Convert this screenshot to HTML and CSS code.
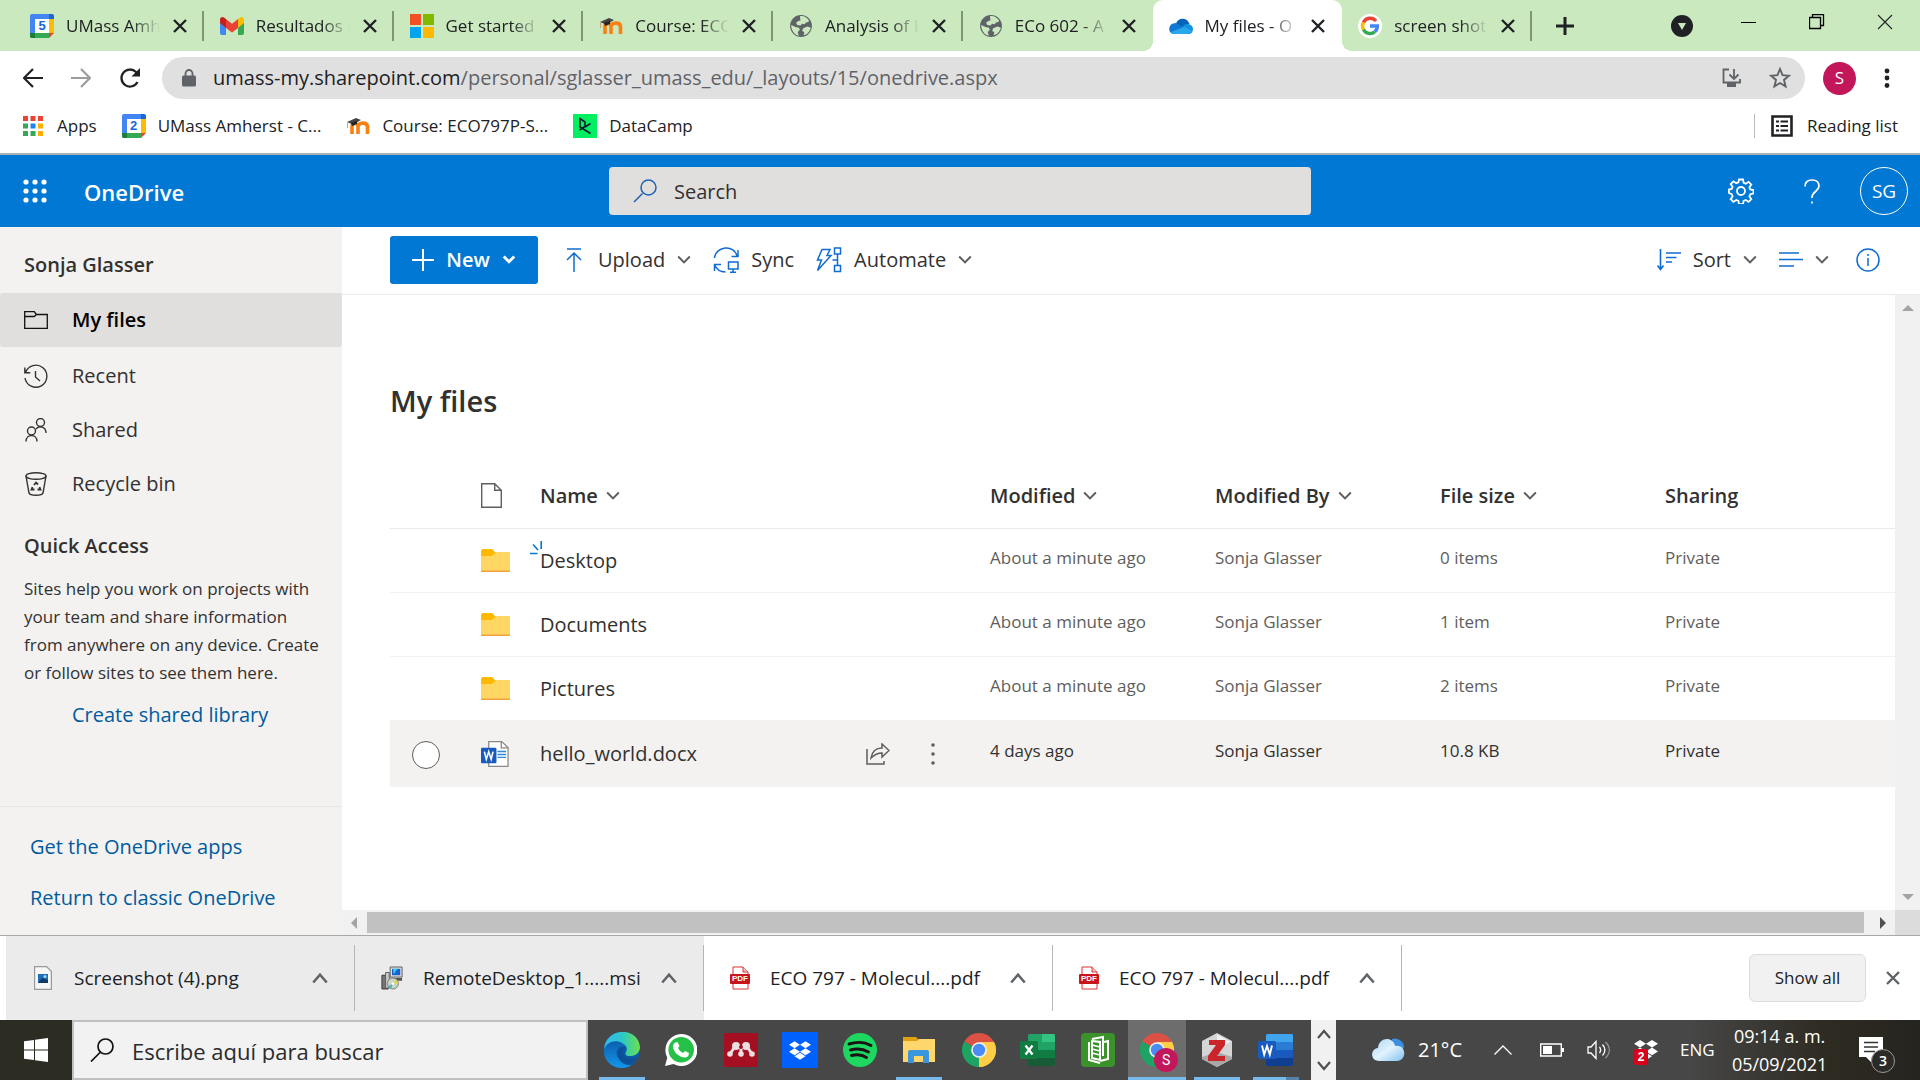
FILE: index.html
```html
<!DOCTYPE html>
<html lang="en">
<head>
<meta charset="utf-8">
<title>My files - OneDrive</title>
<link rel="stylesheet" href="styles.css">
</head>
<body>
<svg class="defs" aria-hidden="true">
  <defs>
    <linearGradient id="g-edge1" x1="0" y1="0" x2="1" y2="0"><stop offset="0" stop-color="#36b8f0"/><stop offset=".5" stop-color="#2cc7c8"/><stop offset="1" stop-color="#6be04a"/></linearGradient>
    <linearGradient id="g-edge2" x1="0" y1="0" x2="0" y2="1"><stop offset="0" stop-color="#0d5fae"/><stop offset="1" stop-color="#1397ea"/></linearGradient>
    <linearGradient id="g-cloud" x1="0" y1="0" x2="1" y2="1"><stop offset="0" stop-color="#a9d6f7"/><stop offset=".5" stop-color="#e2f3fd"/><stop offset="1" stop-color="#7fc0f0"/></linearGradient>
    <symbol id="x" viewBox="0 0 16 16"><path d="M2 2l12 12M14 2L2 14" fill="none" stroke="currentColor" stroke-width="2.4"/></symbol>
    <symbol id="thin-x" viewBox="0 0 16 16"><path d="M1 1l14 14M15 1L1 15" fill="none" stroke="currentColor" stroke-width="1.1"/></symbol>
    <symbol id="down" viewBox="0 0 12 12"><path d="M1 3l5 5 5-5" fill="none" stroke="currentColor" stroke-width="1.7"/></symbol>
    <symbol id="down-bold" viewBox="0 0 12 12"><path d="M1.500 3l4.500 4.500L10.500 3" fill="none" stroke="currentColor" stroke-width="2.4"/></symbol>
    <symbol id="up" viewBox="0 0 16 16"><path d="M2 12l6-7 6 7" fill="none" stroke="currentColor" stroke-width="2.2"/></symbol>
    <symbol id="calendar" viewBox="0 0 24 24"><path d="M0 2a2 2 0 0 1 2-2h17v5H5v14H0z" fill="#4285f4"/><path d="M19 0h3a2 2 0 0 1 2 2v3h-5z" fill="#1967d2"/><path d="M19 5h5v14h-5z" fill="#fbbc04"/><path d="M0 19h19v5H2a2 2 0 0 1-2-2z" fill="#34a853"/><path d="M0 19h5v5H2a2 2 0 0 1-2-2z" fill="#188038"/><path d="M19 19h5l-5 5z" fill="#ea4335"/><path d="M5 5h14v14H5z" fill="#fff"/></symbol>
    <symbol id="gmail" viewBox="0 0 24 18"><path d="M0 3v13a2 2 0 0 0 2 2h4V7z" fill="#4285f4"/><path d="M24 3v13a2 2 0 0 1-2 2h-4V7z" fill="#34a853"/><path d="M18 2l2-1.500c2-1.300 4 0 4 2V6l-6 5z" fill="#fbbc04"/><path d="M6 2L4 .5C2-.8 0 .5 0 2.500V6l6 5z" fill="#c5221f"/><path d="M6 2l6 4.800L18 2v9l-6 4.600L6 11z" fill="#ea4335"/></symbol>
    <symbol id="microsoft" viewBox="0 0 24 24"><path d="M0 0h11v11H0z" fill="#f25022"/><path d="M13 0h11v11H13z" fill="#7fba00"/><path d="M0 13h11v11H0z" fill="#00a4ef"/><path d="M13 13h11v11H13z" fill="#ffb900"/></symbol>
    <symbol id="moodle" viewBox="0 0 24 18"><path d="M6 17V9.500c0-4 6-4 6 0V17m0-7.500c0-4 9-5 9.500 0V17" fill="none" stroke="#f98012" stroke-width="3.600"/><path d="M1 5l9-4 5 2-8 4.500z" fill="#444"/><path d="M5 6l6-2v3L6 9z" fill="#222"/><path d="M1.500 5v6" stroke="#caa67a"/></symbol>
    <symbol id="globe" viewBox="0 0 22 22"><circle cx="11" cy="11" r="10" fill="#5f6368"/><path d="M10 2c3-1 7 1 8.500 4.500-1 1-2 1.500-3 1l-1 2-2.500-.500-1.500 1.500-3-.5-1-2 2-1.500 2-.5zM2 10l4 2 3 .5 1 2-2 2 1 3.500C5 19 2 15 2 10zM13 13l4-1.500 3 1c-1 4-4 6.500-6.500 7l.5-3-2-1z" fill="#cbe9bf"/></symbol>
    <symbol id="cloud" viewBox="0 0 24 16"><path d="M7 6c1-6 11-8 13.500 0L12 11z" fill="#0364b8"/><path d="M1 14C-1 10 1 5 7 5l9 5-5 6H5c-2 0-3-1-4-2z" fill="#0f78d4"/><path d="M14 8c4-4 10-1 10 3 0 3-2 5-4 5h-8z" fill="#1490df"/><path d="M2 14l13-5 8 4c-.7 2-2 3-4 3H5c-1.500 0-2.500-1-3-2z" fill="#28a8ea"/></symbol>
    <symbol id="google" viewBox="0 0 24 24"><circle cx="12" cy="12" r="12" fill="#fff"/><g fill="none" stroke-width="3.400"><path d="M18 7A7.500 7.500 0 0 0 5.400 8.500" stroke="#ea4335"/><path d="M5.400 8.500a7.500 7.500 0 0 0 0 7" stroke="#fbbc05"/><path d="M5.400 15.500a7.500 7.500 0 0 0 11.500 2.200" stroke="#34a853"/><path d="M16.900 17.700A7.500 7.500 0 0 0 19.400 12H12" stroke="#4285f4"/></g></symbol>
    <symbol id="chrome" viewBox="0 0 34 34"><path d="M17 17L2.300 8.500A17 17 0 0 1 31.700 8.500z" fill="#dd5144"/><path d="M17 17l14.700-8.500A17 17 0 0 1 17 34l-3-4z" fill="#ffcd46"/><path d="M17 17l0 17A17 17 0 0 1 2.300 8.500z" fill="#1da462"/><path d="M17 9h14.900A17 17 0 0 1 17 34l7-13z" fill="#ffcd46"/><circle cx="17" cy="17" r="7.800" fill="#f1f1f1"/><circle cx="17" cy="17" r="6.200" fill="#4c8bf5"/></symbol>
    <symbol id="dropbox" viewBox="0 0 24 20"><path d="M6 0l6 3.800-6 3.800-6-3.800zM18 0l6 3.800-6 3.800-6-3.800zM6 7.600l6 3.800-6 3.800-6-3.800zM18 7.600l6 3.800-6 3.800-6-3.800zM12 12.500l6 3.700-6 3.800-6-3.800z" fill="#fff"/></symbol>
    <symbol id="folder" viewBox="0 0 30 28"><path d="M1 4a2 2 0 0 1 2-2h9l3 3h13a2 2 0 0 1 2 2v18H1z" fill="#ffb900"/><path d="M1 9h11l4-4h12a2 2 0 0 1 2 2v16a2 2 0 0 1-2 2H3a2 2 0 0 1-2-2z" fill="#ffd664"/><path d="M1 23.500h29a2 2 0 0 1-2 1.500H3a2 2 0 0 1-2-1.500z" fill="#f2a13a"/></symbol>
    <symbol id="pdf" viewBox="0 0 20 24"><path d="M3 1h10l5 5v17H3z" fill="#fff" stroke="#d33" stroke-width="1"/><path d="M13 1v5h5" fill="#f6c9c9" stroke="#d33"/><rect x="0" y="8" width="20" height="10" rx="1" fill="#c8141a"/></symbol>
  </defs>
</svg>

<header class="browser">
  <div class="tab-strip">
    <nav class="tabs" aria-label="Tabs">
      <div class="tab"><span class="fav cal"><svg><use href="#calendar"/></svg><b>5</b></span><span class="tab-title">UMass Amh</span><button class="tab-x" aria-label="Close tab"><svg><use href="#x"/></svg></button></div>
      <div class="tab"><svg class="fav"><use href="#gmail"/></svg><span class="tab-title">Resultados d</span><button class="tab-x" aria-label="Close tab"><svg><use href="#x"/></svg></button></div>
      <div class="tab"><svg class="fav"><use href="#microsoft"/></svg><span class="tab-title">Get started w</span><button class="tab-x" aria-label="Close tab"><svg><use href="#x"/></svg></button></div>
      <div class="tab"><svg class="fav"><use href="#moodle"/></svg><span class="tab-title">Course: ECO</span><button class="tab-x" aria-label="Close tab"><svg><use href="#x"/></svg></button></div>
      <div class="tab"><svg class="fav"><use href="#globe"/></svg><span class="tab-title">Analysis of E</span><button class="tab-x" aria-label="Close tab"><svg><use href="#x"/></svg></button></div>
      <div class="tab last"><svg class="fav"><use href="#globe"/></svg><span class="tab-title">ECo 602 - A</span><button class="tab-x" aria-label="Close tab"><svg><use href="#x"/></svg></button></div>
      <div class="tab active"><svg class="fav"><use href="#cloud"/></svg><span class="tab-title">My files - O</span><button class="tab-x" aria-label="Close tab"><svg><use href="#x"/></svg></button></div>
      <div class="tab"><svg class="fav"><use href="#google"/></svg><span class="tab-title">screen shot</span><button class="tab-x" aria-label="Close tab"><svg><use href="#x"/></svg></button></div>
    </nav>
    <div class="window-tools">
      <button aria-label="New tab"><svg width="18" height="18" viewBox="0 0 18 18"><path d="M9 0v18M0 9h18" stroke="#202124" stroke-width="3"/></svg></button>
      <button class="tab-search" aria-label="Search tabs"><svg width="22" height="22" viewBox="0 0 22 22"><circle cx="11" cy="11" r="11" fill="#202124"/><path d="M7 8h8l-4 7z" fill="#cbe9bf"/></svg></button>
      <button class="win" aria-label="Minimize"><svg width="16" height="16"><path d="M0 8.500h15" stroke="#000" stroke-width="1"/></svg></button>
      <button class="win" aria-label="Restore"><svg width="16" height="16"><path d="M.5 3.500h11v11H.5zM3.500 3.500v-3h11v11h-3" fill="none" stroke="#000" stroke-width="1.300"/></svg></button>
      <button class="win" aria-label="Close"><svg width="16" height="16"><use href="#thin-x"/></svg></button>
    </div>
  </div>
  <div class="toolbar">
    <button aria-label="Back"><svg width="20" height="20" viewBox="0 0 20 20"><path d="M20 10H2M10 1l-9 9 9 9" fill="none" stroke="#202124" stroke-width="2.200"/></svg></button>
    <button aria-label="Forward"><svg width="20" height="20" viewBox="0 0 20 20"><path d="M0 10h18M10 1l9 9-9 9" fill="none" stroke="#9c9c9c" stroke-width="2.200"/></svg></button>
    <button aria-label="Reload"><svg width="22" height="22" viewBox="0 0 22 22"><path d="M18.500 15A8.500 8.500 0 1 1 17 5l3 3" fill="none" stroke="#202124" stroke-width="2.300"/><path d="M21 1v8.500h-8.500z" fill="#202124"/></svg></button>
    <div class="address">
      <svg width="14" height="18" viewBox="0 0 14 18"><path d="M3.500 7V4.500a3.500 3.500 0 0 1 7 0V7" fill="none" stroke="#5f6368" stroke-width="1.800"/><rect y="6.500" width="14" height="11" rx="1.500" fill="#5f6368"/></svg>
      <a class="url" href="#"><span>umass-my.sharepoint.com</span>/personal/sglasser_umass_edu/_layouts/15/onedrive.aspx</a>
      <button aria-label="Install app"><svg width="20" height="20" viewBox="0 0 20 20"><path d="M7 1.500H1.500v13H18V11" fill="none" stroke="#5f6368" stroke-width="1.800"/><path d="M5 15h9v4H5z" fill="#5f6368"/><path d="M12 1v9M7.500 6.500L12 11l4.500-4.500" fill="none" stroke="#5f6368" stroke-width="1.800"/></svg></button>
      <button aria-label="Bookmark"><svg width="22" height="22" viewBox="0 0 22 22"><path d="M11 2l2.500 6.200 6.500.5-5 4.200 1.600 6.500L11 16l-5.600 3.400L7 12.900 2 8.700l6.500-.5z" fill="none" stroke="#5f6368" stroke-width="1.900"/></svg></button>
    </div>
    <button class="avatar-s" aria-label="Profile">S</button>
    <button aria-label="Menu"><svg width="6" height="20" viewBox="0 0 6 20"><g fill="#202124"><circle cx="3" cy="3" r="2.400"/><circle cx="3" cy="10" r="2.400"/><circle cx="3" cy="17.500" r="2.400"/></g></svg></button>
  </div>
  <nav class="bookmarks" aria-label="Bookmarks">
    <a href="#"><svg width="20" height="20" viewBox="0 0 20 20"><path d="M0 0h5v5H0zM7.500 0h5v5h-5zM15 0h5v5h-5z" fill="#ea4335"/><path d="M0 7.500h5v5H0zM0 15h5v5H0zM7.500 15h5v5h-5z" fill="#34a853"/><path d="M7.500 7.500h5v5h-5z" fill="#1a84f0"/><path d="M15 7.500h5v5h-5zM15 15h5v5h-5z" fill="#fbaf04"/></svg>Apps</a>
    <a href="#" class="tight"><span class="fav cal"><svg><use href="#calendar"/></svg><b>2</b></span>UMass Amherst - C...</a>
    <a href="#" class="tight"><svg class="fav"><use href="#moodle"/></svg>Course: ECO797P-S...</a>
    <a href="#" class="tight"><svg class="fav" viewBox="0 0 24 24"><path d="M0 0h24v24H0z" fill="#03ef62"/><path d="M17.500 19.500L7 13V4.500l5 3.500v4.500L6.500 16M17.500 9.500L12 13" fill="none" stroke="#05192d" stroke-width="1.600"/></svg>DataCamp</a>
    <a href="#" class="reading"><svg width="22" height="22" viewBox="0 0 22 22"><path d="M1.500 1.500h19v19h-19z" fill="none" stroke="#202124" stroke-width="2.600"/><path d="M5 6.500h3M5 11h3M5 15.500h3M9.500 6.500H17M9.500 11H17M9.500 15.500H17" stroke="#202124" stroke-width="2"/></svg>Reading list</a>
  </nav>
</header>

<div class="suite">
  <button class="waffle" aria-label="App launcher"><svg width="24" height="24" viewBox="0 0 24 24" fill="#fff"><circle cx="3" cy="3" r="2.600"/><circle cx="12" cy="3" r="2.600"/><circle cx="21" cy="3" r="2.600"/><circle cx="3" cy="12" r="2.600"/><circle cx="12" cy="12" r="2.600"/><circle cx="21" cy="12" r="2.600"/><circle cx="3" cy="21" r="2.600"/><circle cx="12" cy="21" r="2.600"/><circle cx="21" cy="21" r="2.600"/></svg></button>
  <a class="brand" href="#">OneDrive</a>
  <label class="search"><svg width="24" height="24" viewBox="0 0 24 24"><path d="M9.500 14.500L1 23M15.500 1a7.500 7.500 0 1 1 0 15 7.500 7.500 0 0 1 0-15z" fill="none" stroke="#1f63b5" stroke-width="1.500"/></svg><input type="text" placeholder="Search" aria-label="Search"></label>
  <div class="suite-right">
    <button aria-label="Settings"><svg width="26" height="26" viewBox="0 0 26 26" fill="none" stroke="#fff" stroke-width="1.800"><path d="M11 1.500h4l.6 3.300 2.200.9 2.800-1.900 2.700 2.700-1.900 2.800.9 2.200 3.200.5v3.500l-3.200.7-.9 2.200 1.900 2.800-2.700 2.700-2.800-1.900-2.200.9-.6 3.200h-4l-.6-3.200-2.200-.9-2.800 1.900-2.700-2.700 1.900-2.800-.9-2.200L.9 15v-3.500l2.800-.5.900-2.200-1.900-2.800 2.700-2.700 2.800 1.900 2.200-.9z"/><circle cx="13" cy="13" r="4"/></svg></button>
    <button aria-label="Help"><svg width="16" height="25" viewBox="0 0 16 25" fill="none" stroke="#fff" stroke-width="1.700"><path d="M1 7.500C1 3 4 1 8 1c4.500 0 7 2.500 7 6 0 5-7 6-7 11v1M8 22.500v2"/></svg></button>
    <button class="avatar-sg" aria-label="Account">SG</button>
  </div>
</div>

<div class="workspace">
  <aside class="sidebar">
    <h2 class="owner">Sonja Glasser</h2>
    <nav class="side-nav">
      <a class="selected" href="#"><svg width="24" height="24" viewBox="0 0 24 24" fill="none" stroke="#111" stroke-width="1.300"><path d="M.7 3.700h9.600l2 2.800h11v13.800H.7zM.7 8.500h9.600l2-2"/></svg>My files</a>
      <a href="#"><svg width="24" height="24" viewBox="0 0 24 24" fill="none" stroke="#333" stroke-width="1.400"><path d="M1.500 8.500A11 11 0 1 1 1 14M.8 3.500v5.300h5.500M11.500 7v6l4.500 4"/></svg>Recent</a>
      <a href="#"><svg width="24" height="24" viewBox="0 0 24 24" fill="none" stroke="#333" stroke-width="1.400"><circle cx="7.500" cy="13" r="4"/><path d="M2 23.500c0-8 11-8 11 0"/><circle cx="16.500" cy="4.500" r="4"/><path d="M12 11c3-4 10-2.500 10 4"/></svg>Shared</a>
      <a href="#"><svg width="24" height="24" viewBox="0 0 24 24" fill="none" stroke="#333" stroke-width="1.400"><ellipse cx="12" cy="4" rx="10" ry="3.300"/><path d="M2 4l3 17c1 3 13 3 14 0l3-17"/><path d="M10 13l2-2.500 2 2M8.500 15l-1 2.500h3M15.500 15l1 2.500h-3" stroke-width="1.800"/></svg>Recycle bin</a>
    </nav>
    <h2 class="quick">Quick Access</h2>
    <p>Sites help you work on projects with your team and share information from anywhere on any device. Create or follow sites to see them here.</p>
    <a class="create" href="#">Create shared library</a>
    <footer><a href="#">Get the OneDrive apps</a><a href="#">Return to classic OneDrive</a></footer>
  </aside>

  <main>
    <div class="commands">
      <button class="new"><svg width="22" height="22" viewBox="0 0 22 22"><path d="M11 0v22M0 11h22" stroke="#fff" stroke-width="2"/></svg>New<svg class="chev bold"><use href="#down-bold"/></svg></button>
      <button class="upload"><svg width="24" height="24" viewBox="0 0 24 24" fill="none" stroke="#0f6cd0" stroke-width="1.500"><path d="M5 1h14M12 24V5M5 12l7-7 7 7"/></svg>Upload<svg class="chev"><use href="#down"/></svg></button>
      <button class="sync"><svg width="26" height="26" viewBox="0 0 26 26" fill="none" stroke="#0f6cd0" stroke-width="1.500"><path d="M1.500 11C3-1 21-3 24 9M25 3v6.500h-6.500M1.500 24v-6.500H8M1.500 17.500c2 5 6 7.500 11 7.500M15.500 15h9.500v7h-9.500zM20 22v3M17 25.200h6"/></svg>Sync</button>
      <button class="auto"><svg width="26" height="26" viewBox="0 0 26 26" fill="none" stroke="#0f6cd0" stroke-width="1.500"><path d="M6 2.500h8l-3 6h4L1.500 23.500l4-10.500H1.500zM18.500 1h6v6h-6zM18.500 18.500h6v6h-6zM21.500 7v11.500M21.500 13h-5"/></svg>Automate<svg class="chev"><use href="#down"/></svg></button>
      <button class="sort"><svg width="24" height="22" viewBox="0 0 24 22" fill="none" stroke="#0f6cd0" stroke-width="1.600"><path d="M3.500 0v20M.5 16.500l3 4 3-4M9 4h15M9 8.500h10.500M9 13h6"/></svg>Sort<svg class="chev"><use href="#down"/></svg></button>
      <button class="view" aria-label="View options"><svg width="24" height="22" viewBox="0 0 24 22" fill="none" stroke="#0f6cd0" stroke-width="1.600"><path d="M0 4h20M0 10.500h24M0 17h15"/></svg><svg class="chev"><use href="#down"/></svg></button>
      <button class="info" aria-label="Details"><svg width="24" height="24" viewBox="0 0 24 24" fill="none" stroke="#0f6cd0" stroke-width="1.500"><circle cx="12" cy="12" r="11"/><path d="M12 10v8M12 6v2"/></svg></button>
    </div>
    <div class="viewport">
      <section class="files">
        <h1>My files</h1>
        <table>
          <colgroup><col class="c-pick"><col class="c-icon"><col class="c-name"><col class="c-meta"><col class="c-meta"><col class="c-meta"><col></colgroup>
          <thead>
            <tr><th></th><th><svg class="doc" width="21" height="25" viewBox="0 0 21 25"><path d="M.7.700h13l6.600 6.600v17H.7zM13.700.700v6.600h6.600" fill="none" stroke="#605e5c" stroke-width="1.400"/></svg></th><th>Name<svg class="chev"><use href="#down"/></svg></th><th>Modified<svg class="chev"><use href="#down"/></svg></th><th>Modified By<svg class="chev"><use href="#down"/></svg></th><th>File size<svg class="chev"><use href="#down"/></svg></th><th>Sharing</th></tr>
          </thead>
          <tbody>
            <tr><td></td><td><svg class="folder"><use href="#folder"/></svg></td><td class="name fresh"><svg class="glimmer" viewBox="0 0 12 14"><path d="M11.200 0v8M3 3.500l5 5.500M0 12.500h7.500" fill="none" stroke="#0078d4" stroke-width="1.600"/></svg><a href="#">Desktop</a></td><td>About a minute ago</td><td>Sonja Glasser</td><td>0 items</td><td>Private</td></tr>
            <tr><td></td><td><svg class="folder"><use href="#folder"/></svg></td><td class="name"><a href="#">Documents</a></td><td>About a minute ago</td><td>Sonja Glasser</td><td>1 item</td><td>Private</td></tr>
            <tr><td></td><td><svg class="folder"><use href="#folder"/></svg></td><td class="name"><a href="#">Pictures</a></td><td>About a minute ago</td><td>Sonja Glasser</td><td>2 items</td><td>Private</td></tr>
            <tr class="hover"><td class="pick"><input type="checkbox" aria-label="Select hello_world.docx"></td><td><svg class="word-doc" viewBox="0 0 29 27"><path d="M8 .7h13.500l6.500 6v19.600H8z" fill="#fff" stroke="#8a8886" stroke-width="1.300"/><path d="M21 .7v6.500h7" fill="none" stroke="#8a8886" stroke-width="1.300"/><path d="M17 11h9M17 14h9M17 17h9" stroke="#2b88d8" stroke-width="1.500"/><rect y="7" width="16" height="16" rx="1" fill="#185abd"/><path d="M3.500 11l2 8 2.500-8 2.500 8 2-8" fill="none" stroke="#fff" stroke-width="1.600"/></svg></td>
              <td class="name"><div class="name-row"><a href="#">hello_world.docx</a><button aria-label="Share"><svg width="24" height="22" viewBox="0 0 24 22" fill="none" stroke="#605e5c" stroke-width="1.500"><path d="M1 6v15h17v-3M16 1l7 6.500-7 6.500v-4c-5 0-8 2-11 5 1-6 4-10 11-10z"/></svg></button><button aria-label="More actions"><svg width="6" height="24" viewBox="0 0 6 24" fill="#605e5c"><circle cx="3" cy="3" r="1.800"/><circle cx="3" cy="12" r="1.800"/><circle cx="3" cy="21" r="1.800"/></svg></button></div></td><td>4 days ago</td><td>Sonja Glasser</td><td>10.8 KB</td><td>Private</td></tr>
          </tbody>
        </table>
      </section>
      <div class="v-scroll"><i class="tri t-up"></i><i class="tri t-down"></i></div>
      <div class="h-scroll"><i class="tri t-left"></i><span class="thumb"></span><i class="tri t-right"></i></div>
      <div class="corner"></div>
    </div>
  </main>
</div>

<section class="downloads" aria-label="Downloads">
  <div class="item shaded"><svg width="18" height="24" viewBox="0 0 18 24"><path d="M.6.600h12l4.800 5v17.800H.6z" fill="#f7f7f7" stroke="#999" stroke-width="1.200"/><path d="M4 8h10v9H4z" fill="#1c6fb8"/><path d="M4 17l4-5 6 2v3z" fill="#123a6b"/><circle cx="11" cy="10.500" r="1.500" fill="#9fd8f7"/></svg><span>Screenshot (4).png</span><button aria-label="Options"><svg><use href="#up"/></svg></button></div>
  <div class="item shaded"><svg width="24" height="26" viewBox="0 0 24 26"><path d="M1 10h7v15H1z" fill="#777" stroke="#333"/><path d="M5 7h4v17H5z" fill="#ccc" stroke="#555"/><path d="M10 1h13v11H10z" fill="#ddd" stroke="#555"/><path d="M12 3h9v7h-9z" fill="#1a5fd0"/><path d="M13 3h5l-4 6z" fill="#36d0f0"/><path d="M12 13h11v3H12z" fill="#555"/><circle cx="13" cy="19" r="6" fill="#c9d7c7" stroke="#777"/><path d="M13 19l4-4 2 4z" fill="#e6d23c"/><path d="M13 19l-5 3 3 3z" fill="#46b5c0"/><circle cx="13" cy="19" r="1.500" fill="#fff"/></svg><span>RemoteDesktop_1.....msi</span><button aria-label="Options"><svg><use href="#up"/></svg></button></div>
  <div class="item"><span class="pdf"><svg><use href="#pdf"/></svg><b>PDF</b></span><span>ECO 797 - Molecul....pdf</span><button aria-label="Options"><svg><use href="#up"/></svg></button></div>
  <div class="item"><span class="pdf"><svg><use href="#pdf"/></svg><b>PDF</b></span><span>ECO 797 - Molecul....pdf</span><button aria-label="Options"><svg><use href="#up"/></svg></button></div>
  <button class="show-all">Show all</button>
  <button class="dismiss" aria-label="Close downloads bar"><svg><use href="#x"/></svg></button>
</section>

<footer class="taskbar">
  <button class="start" aria-label="Start"><svg width="24" height="24" viewBox="0 0 24 24" fill="#fff"><path d="M0 3.300l10-1.400v9.600H0zM11 1.800L24 0v11.500H11zM0 12.500h10v9.600L0 20.700zM11 12.500h13V24l-13-1.800z"/></svg></button>
  <label class="task-search"><svg width="24" height="24" viewBox="0 0 24 24"><path d="M10 14.500L1 23.500M15.500 1a7.500 7.500 0 1 1 0 15 7.500 7.500 0 0 1 0-15z" fill="none" stroke="#111" stroke-width="1.700"/></svg><input type="text" placeholder="Escribe aquí para buscar" aria-label="Buscar"></label>
  <div class="apps">
    <button class="open" aria-label="Edge"><svg width="36" height="36" viewBox="0 0 36 36"><circle cx="18" cy="18" r="18" fill="#0c59a4"/><path d="M0 17C2-5 34-6 36 15c0 5-4 9-9 9-6 0-6-2-5-4 4-7-7-14-22-3z" fill="url(#g-edge1)"/><path d="M0 18c2-8 12-11 18-7 2 1 4 3 4 4-7-3-12 4-8 11 3 5 8 8 14 7-13 8-29-1-28-15z" fill="url(#g-edge2)"/><path d="M22 15c-3 1-4 4-3 7 2 5 9 6 15 3-4 7-11 8-15 5-6-4-7-14 0-15z" fill="#0c4f97"/></svg></button>
    <button aria-label="WhatsApp"><svg width="32" height="32" viewBox="0 0 32 32"><path d="M0 32l2.300-8.300A16 16 0 1 1 8.500 30z" fill="#fff"/><circle cx="16.200" cy="15.800" r="12.800" fill="#25c046"/><path d="M10.500 8.500l2-.5 2 4-1.500 2c1 2 3 4 5 5l2-2 4 2c0 3-2 4.500-4 4.500-6 0-12-6-12-11 0-2 1-3.500 2.500-4z" fill="#fff"/></svg></button>
    <button aria-label="Mendeley"><svg width="34" height="34" viewBox="0 0 34 34"><rect width="34" height="34" rx="1" fill="#a50f22"/><path d="M6 21l6-9 5 3 5-3 6 9M17 15v6" fill="none" stroke="#eadfe0" stroke-width="3"/><g fill="#eadfe0"><circle cx="12" cy="13" r="4"/><circle cx="22" cy="13" r="4"/><circle cx="6" cy="21" r="2.800"/><circle cx="17" cy="21" r="2.800"/><circle cx="28" cy="21" r="2.800"/></g><circle cx="17" cy="14" r="2" fill="#a50f22"/></svg></button>
    <button aria-label="Dropbox"><span class="dbx"><svg width="22" height="19"><use href="#dropbox"/></svg></span></button>
    <button aria-label="Spotify"><svg width="34" height="34" viewBox="0 0 34 34"><circle cx="17" cy="17" r="17" fill="#1ed760"/><path d="M6 11c8-2.500 16-2 22 1.500M7.500 17c7-2 13-1 18 2M8.500 22.500c6-1.500 11-.8 15 2" fill="none" stroke="#191414" stroke-width="2.900" stroke-linecap="round"/></svg></button>
    <button class="open" aria-label="File Explorer"><svg width="32" height="26" viewBox="0 0 32 26"><path d="M0 0h13l3 3v3H0z" fill="#dfa20f"/><path d="M0 4h14l2-2h16v23H0z" fill="#ffd66b"/><path d="M5 26V15a2 2 0 0 1 2-2h17a2 2 0 0 1 2 2v11h-6v-7h-9v7z" fill="#3b97dd"/></svg></button>
    <button aria-label="Chrome"><svg width="34" height="34"><use href="#chrome"/></svg></button>
    <button aria-label="Excel"><svg width="36" height="32" viewBox="0 0 36 32"><rect x="8" width="27" height="32" rx="1.500" fill="#21a366"/><path d="M22 0h11.500a1.500 1.500 0 0 1 1.500 1.500V8H22z" fill="#33c481"/><path d="M8 16h27v8H8z" fill="#107c41"/><path d="M8 24h27v6.500a1.500 1.500 0 0 1-1.500 1.500h-24A1.500 1.500 0 0 1 8 30.500z" fill="#185c37"/><rect y="7" width="18" height="18" rx="1.500" fill="#107c41"/><path d="M5.500 11.500l7 9M12.500 11.500l-7 9" stroke="#fff" stroke-width="2.300"/></svg></button>
    <button aria-label="Library"><svg width="34" height="34" viewBox="0 0 34 34"><rect width="34" height="34" rx="4" fill="#3b922b"/><path d="M11 6l11-2v19M23 9l4-1v18l-8 2M8 9v18l11 3M11 8v17l8 2V9z" fill="none" stroke="#fff" stroke-width="2"/><path d="M11 12l8 2M11 16l8 2M11 20l8 2" stroke="#fff" stroke-width="1.600"/></svg></button>
    <button class="open current" aria-label="Chrome"><svg width="34" height="34"><use href="#chrome"/></svg><b class="badge-s">S</b></button>
    <button class="open" aria-label="Zotero"><svg width="30" height="34" viewBox="0 0 30 34"><path d="M15 0l15 8v18l-15 8-15-8V8z" fill="#d5d5d5"/><path d="M15 1.500l13.500 7.300L15 17z" fill="#f0f0f0"/><path d="M0 24l15-5 15 5v2l-15 8-15-8z" fill="#a8a8a8"/><path d="M7 7h16v5l-8 11h8v5H6v-5l8-11H7z" fill="#c9252b"/></svg></button>
    <button class="open stacked" aria-label="Word"><svg width="36" height="32" viewBox="0 0 36 32"><rect x="8" width="27" height="32" rx="1.500" fill="#2b7cd3"/><path d="M8 8V1.500A1.500 1.500 0 0 1 9.500 0h24A1.500 1.500 0 0 1 35 1.500V8z" fill="#41a5ee"/><path d="M8 16h27v8H8z" fill="#185abd"/><path d="M8 24h27v6.500a1.500 1.500 0 0 1-1.500 1.500h-24A1.500 1.500 0 0 1 8 30.500z" fill="#103f91"/><rect y="7" width="18" height="18" rx="1.500" fill="#185abd"/><path d="M4 11.500l2.200 9L9 12l2.800 8.500 2.200-9" fill="none" stroke="#fff" stroke-width="1.900"/></svg></button>
  </div>
  <div class="app-scroll"><button aria-label="Scroll up"><svg><use href="#up"/></svg></button><button class="flip" aria-label="Scroll down"><svg><use href="#up"/></svg></button></div>
  <div class="tray">
    <button class="weather"><svg width="34" height="24" viewBox="0 0 34 24"><path d="M20 1c5-2 12 2 12 8l-4 6-8-8z" fill="#3f8fe0"/><path d="M7 23C-2 23-2 11 6 10 7-1 21-2 23 8c12-2 12 15 2 15z" fill="url(#g-cloud)"/></svg>21°C</button>
    <button class="t-chev" aria-label="Hidden icons"><svg width="18" height="10" viewBox="0 0 18 10"><path d="M.5 9.500L9 1l8.500 8.500" fill="none" stroke="#fff" stroke-width="1.300"/></svg></button>
    <button class="t-bat" aria-label="Battery"><svg width="24" height="14" viewBox="0 0 24 14"><path d="M.7 1h20.600v12H.7z" fill="none" stroke="#fff" stroke-width="1.400"/><path d="M3 3h9v8H3zM22 5h2v4h-2z" fill="#fff"/></svg></button>
    <button class="t-vol" aria-label="Volume"><svg width="24" height="20" viewBox="0 0 24 20" fill="none" stroke="#fff" stroke-width="1.300"><path d="M1 7h3l5-5.500v17L4 13H1zM12.500 7c1.500 2 1.500 4 0 6M15.500 4.500c3 3.500 3 7.500 0 11"/><path d="M18.500 2c5 5 5 11 0 16" stroke="#999"/></svg></button>
    <button class="t-dbx" aria-label="Dropbox, 2 notifications"><svg width="24" height="20"><use href="#dropbox"/></svg><b>2</b></button>
    <button class="t-lang">ENG</button>
    <button class="clock"><span>09:14 a. m.</span><span>05/09/2021</span></button>
    <button class="notes" aria-label="3 notifications"><svg width="26" height="26" viewBox="0 0 26 26"><path d="M0 0h24v20H13l-1 5-5-5H0z" fill="#fff"/><path d="M5 5.500h14M5 10h14M5 14.500h11" stroke="#333" stroke-width="1.300"/></svg><b>3</b></button>
  </div>
</footer>
</body>
</html>
```
FILE: styles.css
```css
* { box-sizing: border-box; }
body {
  margin: 0;
  min-height: 100vh;
  display: flex;
  flex-direction: column;
  font: 17px/24px "Open Sans", "Noto Sans", sans-serif;
  color: #202124;
  background: #fff;
}
.defs { position: absolute; width: 0; height: 0; }
svg { display: block; flex: none; }
a { color: inherit; text-decoration: none; }
h1, h2, p { margin: 0; }
button {
  border: 0;
  padding: 0;
  background: none;
  font: inherit;
  color: inherit;
  display: flex;
  align-items: center;
  justify-content: center;
  flex: none;
}
input { font: inherit; border: 0; background: none; outline: 0; padding: 0; min-width: 0; flex: 1; }

/* Browser chrome */
.tab-strip { display: flex; height: 51px; background: #cbe9bf; }
.tabs { flex: 1; min-width: 0; display: flex; padding-left: 14px; }
.tab {
  flex: 1 1 0;
  min-width: 0;
  display: flex;
  align-items: center;
  gap: 12px;
  padding: 0 16px;
  background: linear-gradient(#7d9676, #7d9676) right 11px / 2px 30px no-repeat;
  background-position: right 11px;
}
.tab.last { background: none; }
.tab.active { background: #fff; border-radius: 10px 10px 0 0; position: relative; }
.tab.active::before, .tab.active::after {
  content: "";
  position: absolute;
  bottom: 0;
  width: 10px;
  height: 10px;
}
.tab.active::before { left: -10px; background: radial-gradient(circle at 0 0, transparent 10px, #fff 10px); }
.tab.active::after { right: -10px; background: radial-gradient(circle at 100% 0, transparent 10px, #fff 10px); }
.fav { width: 24px; height: 24px; flex: none; }
.cal { position: relative; }
.cal svg { width: 24px; height: 24px; }
.cal b {
  position: absolute;
  inset: 0;
  text-align: center;
  font: bold 13px/24px "Liberation Sans", sans-serif;
  color: #1967d2;
}
.tab-title {
  flex: 1;
  min-width: 0;
  overflow: hidden;
  white-space: nowrap;
  -webkit-mask-image: linear-gradient(90deg, #000 70%, transparent);
  mask-image: linear-gradient(90deg, #000 70%, transparent);
}
.tab-x svg { width: 16px; height: 16px; }
.window-tools { width: 388px; flex: none; display: flex; align-items: center; padding-left: 24px; }
.tab-search { margin-left: 97px; }
.win { height: 44px; align-self: flex-start; width: 68px; }
.tab-search + .win { margin-left: 22px; }
.toolbar { display: flex; align-items: center; gap: 28px; height: 54px; padding: 0 30px 0 23px; }
.address {
  flex: 1;
  display: flex;
  align-items: center;
  gap: 27px;
  height: 42px;
  margin-left: -7px;
  margin-right: -10px;
  padding: 0 14px 0 20px;
  border-radius: 21px;
  background: #e0e0e0;
}
.url { flex: 1; font-size: 20px; color: #5f6368; margin-left: -10px; }
.url span { color: #202124; }
.avatar-s { width: 33px; height: 33px; border-radius: 50%; background: #c2185b; color: #fff; }
.bookmarks {
  display: flex;
  align-items: center;
  gap: 25px;
  height: 50px;
  padding: 0 22px 6px 23px;
  border-bottom: 2px solid #b0b0b0;
}
.bookmarks a { display: flex; align-items: center; gap: 14px; }
.bookmarks .tight { gap: 12px; }
.bookmarks .reading { margin-left: auto; padding-left: 16px; border-left: 1px solid #bbb; }

/* Suite header */
.suite { display: flex; align-items: center; height: 72px; background: #0078d4; color: #fff; padding-right: 12px; }
.waffle { margin-left: 23px; }
.brand { flex: 1 0 390px; margin-left: 37px; padding-top: 2px; font-size: 22px; font-weight: 600; }
.search {
  display: flex;
  align-items: center;
  gap: 17px;
  width: 702px;
  height: 48px;
  padding: 0 24px;
  border-radius: 4px;
  background: #e1dfdd;
}
.search input { font-size: 20px; padding-top: 2px; }
.search input::placeholder { color: #323130; opacity: 1; }
.suite-right { flex: 1 0 462px; display: flex; align-items: center; justify-content: flex-end; gap: 50px; }
.avatar-sg { width: 48px; height: 48px; margin-left: -10px; border: 1px solid #fff; border-radius: 50%; font-size: 19px; font-weight: 500; }

/* Workspace */
.workspace { flex: 1; display: flex; color: #323130; font-size: 20px; }
.sidebar { width: 342px; flex: none; display: flex; flex-direction: column; background: #f3f2f1; line-height: 28px; }
.owner { height: 66px; padding: 24px 24px 0; font-size: 20px; font-weight: 600; }
.side-nav { margin-bottom: 21px; }
.side-nav a { display: flex; align-items: center; gap: 24px; height: 54px; padding: 0 24px; }
.side-nav .selected { background: #e1dfdd; border-radius: 3px; font-weight: 600; color: #000; margin-bottom: 2px; }
.quick { padding: 0 24px; margin-bottom: 15px; font-size: 20px; font-weight: 600; }
.sidebar p { padding: 0 18px 0 24px; font-size: 17px; }
.create { margin: 14px 72px; color: #005a9e; }
.sidebar footer { margin-top: auto; display: flex; flex-direction: column; gap: 23px; padding: 26px 30px 23px; border-top: 1px solid #e8e6e4; color: #005a9e; }
main { flex: 1; min-width: 0; display: flex; flex-direction: column; }
.commands { display: flex; align-items: center; height: 68px; padding: 0 40px 1px 48px; border-bottom: 1px solid #eaeaea; }
.commands button { gap: 12px; height: 48px; }
.chev { width: 14px; height: 14px; color: #605e5c; }
.chev.bold { color: #fff; }
.commands .new { width: 148px; background: #0078d4; color: #fff; font-weight: 600; border-radius: 3px; }
.commands .upload { margin-left: 24px; }
.commands .sync { margin-left: 22px; }
.commands .auto { margin-left: 22px; }
.commands .sort { margin-left: auto; }
.commands .view { margin-left: 22px; }
.commands .info { margin-left: 27px; }
.viewport { flex: 1; display: grid; grid-template: 1fr 25px / 1fr 25px; }
.files { padding: 86px 0 0 48px; min-width: 0; }
h1 { font-size: 29px; line-height: 40px; font-weight: 600; margin-bottom: 44px; }
table { width: 100%; table-layout: fixed; border-collapse: separate; border-spacing: 0; }
.c-pick { width: 76px; }
.c-icon { width: 74px; }
.c-name { width: 450px; }
.c-meta { width: 225px; }
th { height: 64px; padding: 0 0 2px; text-align: left; font-size: 20px; font-weight: 600; border-bottom: 1px solid #eaeaea; white-space: nowrap; }
th .chev { display: inline-block; margin-left: 8px; }
.doc { margin-left: 15px; }
td { height: 64px; padding: 0 0 6px; font-size: 17px; color: #605e5c; border-bottom: 1px solid #f3f2f1; }
.name { font-size: 20px; color: #323130; padding: 0; }
.folder { width: 30px; height: 28px; margin: 6px 0 0 14px; }
.word-doc { width: 28px; height: 28px; margin: 6px 0 0 15px; }
.fresh { position: relative; }
.glimmer { position: absolute; left: -10px; top: 12px; width: 12px; height: 14px; }
.hover td { height: 66px; background: #f3f2f1; color: #323130; }
.pick { padding: 2px 0 0 22px; }
.pick input { appearance: none; display: block; width: 28px; height: 28px; margin: 0; border: 1px solid #605e5c; border-radius: 50%; background: #fff; }
.name-row { display: flex; align-items: center; padding-right: 54px; gap: 40px; }
.name-row a { flex: 1; }
.v-scroll { background: #f1f1f1; display: flex; flex-direction: column; justify-content: space-between; align-items: center; padding: 10px 0; }
.h-scroll { background: #f1f1f1; display: flex; align-items: center; gap: 10px; padding: 0 9px; }
.thumb { flex: 1; height: 21px; margin-right: 6px; background: #c1c1c1; }
.corner { background: #dcdcdc; }
.tri { width: 0; height: 0; border: 6px solid transparent; flex: none; }
.t-up { border-top: 0; border-bottom-color: #a3a3a3; }
.t-down { border-bottom: 0; border-top-color: #a3a3a3; }
.t-left { border-left: 0; border-right-color: #a3a3a3; }
.t-right { border-right: 0; border-left-color: #505050; }

/* Downloads shelf */
.downloads { display: flex; align-items: center; height: 85px; padding: 0 19px 0 6px; border-top: 1px solid #a9a9a9; font-size: 19px; }
.item {
  flex: 0 1 349px;
  align-self: stretch;
  display: flex;
  align-items: center;
  padding: 0 26px;
  background: linear-gradient(#b5b5b5, #b5b5b5) right 9px / 1px 66px no-repeat;
  background-position: right 9px;
}
.item.shaded { background-color: #ebebeb; }
.item > span:not(.pdf) { flex: 1; white-space: nowrap; }
.item > :first-child { margin-right: 20px; }
.item > svg:first-child { width: 22px; }
.item button svg { width: 18px; height: 18px; color: #5f6368; }
.pdf { position: relative; width: 20px; height: 24px; flex: none; }
.pdf svg { width: 20px; height: 24px; }
.pdf b { position: absolute; left: 0; right: 0; top: 8px; text-align: center; font: bold 8px/10px "Liberation Sans", sans-serif; color: #fff; }
.show-all { margin-left: auto; width: 117px; height: 48px; border: 1px solid #dcdcdc; border-radius: 6px; background: #f1f1f1; font-size: 17px; font-weight: 500; }
.dismiss { margin-left: 19px; color: #5f6368; }
.dismiss svg { width: 16px; height: 16px; }

/* Taskbar */
.taskbar { display: flex; height: 60px; background: linear-gradient(90deg, #474747 88%, #2e2b22 95%, #26241f); color: #fff; }
.start { width: 72px; background: #2c2c22; }
.task-search { width: 516px; display: flex; align-items: center; gap: 18px; padding: 0 16px; border: 2px solid #c0c0c0; background: #f2f2f2; }
.task-search input { font-size: 22px; padding-top: 2px; }
.task-search input::placeholder { color: #2b2b2b; opacity: 1; }
.apps { flex: 1; display: flex; justify-content: space-between; padding: 0 12px 0 11px; }
.apps button { width: 46px; border-bottom: 3px solid transparent; padding-top: 3px; position: relative; }
.apps .open { border-bottom-color: #76b9ed; }
.apps .current { width: 58px; margin: 0 -6px; background: #6d6d6d; }
.apps .stacked { border-image: linear-gradient(90deg, #76b9ed 70%, #5683a8 70%) 1; border-width: 0 0 3px; }
.dbx { width: 36px; height: 36px; display: flex; align-items: center; justify-content: center; background: #0061ff; }
.badge-s { position: absolute; right: 8px; bottom: 5px; width: 24px; height: 24px; border-radius: 50%; background: #c2185b; font: 14px/24px Roboto, sans-serif; text-align: center; }
.app-scroll { width: 25px; display: flex; flex-direction: column; justify-content: space-between; align-items: center; padding: 6px 0; background: #f1f1f1; color: #505050; }
.app-scroll svg { width: 16px; height: 16px; }
.flip { transform: rotate(180deg); }
.tray { display: flex; align-items: center; width: 584px; padding-left: 36px; font-size: 19px; }
.weather { gap: 12px; font-size: 20px; }
.t-chev { margin-left: 32px; }
.t-bat { margin-left: 28px; }
.t-vol { margin-left: 23px; }
.t-dbx { margin-left: 23px; position: relative; }
.t-dbx b { position: absolute; left: 0; bottom: -5px; width: 14px; height: 16px; background: #d9001b; border-radius: 2px; font: bold 12px/16px "Liberation Sans", sans-serif; }
.t-lang { margin-left: 22px; font-size: 17px; }
.clock { flex-direction: column; width: 100px; margin-left: 15px; font-size: 18px; line-height: 28px; white-space: nowrap; }
.notes { margin-left: auto; margin-right: 35px; position: relative; }
.notes b { position: absolute; left: 12px; top: 12px; width: 24px; height: 24px; border: 1px solid #999; border-radius: 50%; background: #2b2a26; font-size: 14px; line-height: 22px; font-weight: 600; }
```
